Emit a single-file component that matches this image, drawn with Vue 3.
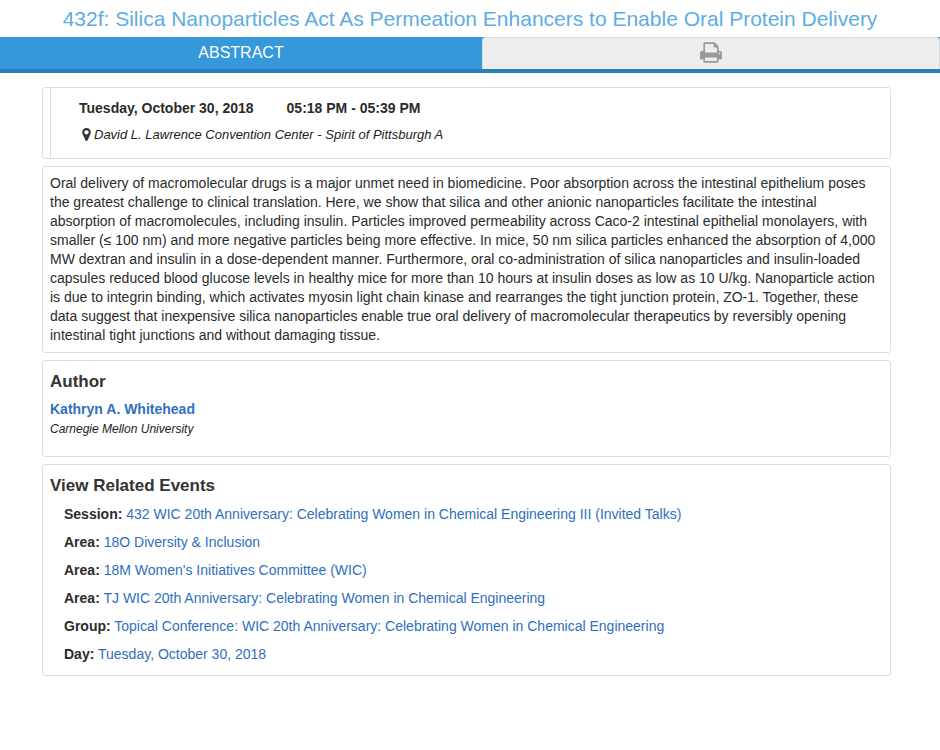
<script setup>
const events = [
  { label: 'Session', text: '432 WIC 20th Anniversary: Celebrating Women in Chemical Engineering III (Invited Talks)' },
  { label: 'Area', text: '18O Diversity & Inclusion' },
  { label: 'Area', text: "18M Women's Initiatives Committee (WIC)" },
  { label: 'Area', text: 'TJ WIC 20th Anniversary: Celebrating Women in Chemical Engineering' },
  { label: 'Group', text: 'Topical Conference: WIC 20th Anniversary: Celebrating Women in Chemical Engineering' },
  { label: 'Day', text: 'Tuesday, October 30, 2018' },
]
</script>

<template>
  <div class="page">
    <h1 class="title">432f: Silica Nanoparticles Act As Permeation Enhancers to Enable Oral Protein Delivery</h1>
    <nav class="tabs">
      <button type="button" class="tab active">ABSTRACT</button>
      <button type="button" class="tab print" aria-label="Print">
        <svg class="print-icon" viewBox="0 128 1664 1536" aria-hidden="true">
          <path d="M384 1536h896v-256h-896v256zM384 896h896v-384h-160q-40 0-68-28t-28-68v-160h-640v640zM1536 960q0-26-19-45t-45-19-45 19-19 45 19 45 45 19 45-19 19-45zM1664 960v416q0 13-9.5 22.5t-22.5 9.5h-224v160q0 40-28 68t-68 28h-960q-40 0-68-28t-28-68v-160h-224q-13 0-22.5-9.5t-9.5-22.5v-416q0-79 56.5-135.5t135.5-56.5h64v-544q0-40 28-68t68-28h672q40 0 88 20t76 48l152 152q28 28 48 76t20 88v256h64q79 0 135.5 56.5t56.5 135.5z" />
        </svg>
      </button>
    </nav>
    <main class="content">
      <section class="card schedule">
        <div class="details">
          <p class="when"><span>Tuesday, October 30, 2018</span><span>05:18 PM - 05:39 PM</span></p>
          <p class="where">
            <svg class="pin" viewBox="0 128 1024 1536" aria-hidden="true">
              <path d="M768 640q0-106-75-181t-181-75-181 75-75 181 75 181 181 75 181-75 75-181zM1024 640q0 109-33 179l-364 774q-16 33-47.5 52t-67.5 19-67.5-19-46.5-52l-365-774q-33-70-33-179 0-212 150-362t362-150 362 150 150 362z" />
            </svg>
            <span>David L. Lawrence Convention Center - Spirit of Pittsburgh A</span>
          </p>
        </div>
      </section>
      <section class="card abstract">
        <p>Oral delivery of macromolecular drugs is a major unmet need in biomedicine. Poor absorption across the intestinal epithelium poses the greatest challenge to clinical translation. Here, we show that silica and other anionic nanoparticles facilitate the intestinal absorption of macromolecules, including insulin. Particles improved permeability across Caco-2 intestinal epithelial monolayers, with smaller (≤ 100 nm) and more negative particles being more effective. In mice, 50 nm silica particles enhanced the absorption of 4,000 MW dextran and insulin in a dose-dependent manner. Furthermore, oral co-administration of silica nanoparticles and insulin-loaded capsules reduced blood glucose levels in healthy mice for more than 10 hours at insulin doses as low as 10 U/kg. Nanoparticle action is due to integrin binding, which activates myosin light chain kinase and rearranges the tight junction protein, ZO-1. Together, these data suggest that inexpensive silica nanoparticles enable true oral delivery of macromolecular therapeutics by reversibly opening intestinal tight junctions and without damaging tissue.</p>
      </section>
      <section class="card author">
        <h2>Author</h2>
        <a class="name" href="#">Kathryn A. Whitehead</a>
        <p class="affiliation">Carnegie Mellon University</p>
      </section>
      <section class="card related">
        <h2>View Related Events</h2>
        <ul>
          <li v-for="event in events" :key="event.text">
            <strong>{{ event.label }}:</strong> <a href="#">{{ event.text }}</a>
          </li>
        </ul>
      </section>
    </main>
  </div>
</template>

<style>
body {
  background: #fff;
}
</style>

<style scoped>
.page {
  font: 14px/19px "Liberation Sans", Arial, Helvetica, sans-serif;
  color: #2b2b2b;
}
h1, h2, p, ul {
  margin: 0;
  padding: 0;
}
a {
  color: #2f6fbe;
  text-decoration: none;
}
.title {
  padding: 4px 0;
  font-size: 21px;
  line-height: 29px;
  font-weight: 400;
  text-align: center;
  color: #5dade2;
}
.tabs {
  display: grid;
  grid-template-columns: 482fr 458fr;
  height: 32px;
  background: #3498db;
  border-bottom: 4px solid #2980b9;
}
.tab {
  display: flex;
  align-items: center;
  justify-content: center;
  padding: 0;
  border: 0;
  font: 16px/20px "Liberation Sans", Arial, Helvetica, sans-serif;
  color: #fff;
  background: #3498db;
  cursor: pointer;
}
.print {
  padding-bottom: 2px;
  background: #eee;
  border: 1px solid #d9d9d9;
  border-bottom: 0;
  border-radius: 4px 4px 0 0;
}
.print-icon {
  width: 22px;
  height: 21px;
  fill: #999;
}
.content {
  display: flex;
  flex-direction: column;
  gap: 7px;
  padding: 14px 49px 14px 42px;
}
.card {
  border: 1px solid #ddd;
  border-radius: 3px;
  padding: 7px;
}
.schedule {
  padding: 0 7px;
}
.details {
  border-left: 1px solid #ddd;
  padding: 11px 28px 14px;
}
.when {
  display: flex;
  gap: 33px;
  font-weight: 700;
}
.where {
  display: flex;
  align-items: center;
  gap: 3px;
  padding: 7px 3px 0;
  font-size: 13px;
  font-style: italic;
  color: #222;
}
.pin {
  width: 9px;
  height: 13px;
  fill: #333;
}
h2 {
  font-size: 17px;
  line-height: 28px;
  color: #333;
}
.author {
  padding-bottom: 16px;
}
.name {
  display: block;
  padding-top: 4px;
  font-weight: 700;
}
.affiliation {
  font-size: 12px;
  line-height: 21px;
  font-style: italic;
  color: #222;
}
.related ul {
  list-style: none;
  padding-left: 14px;
}
.related li {
  line-height: 28px;
}
</style>
